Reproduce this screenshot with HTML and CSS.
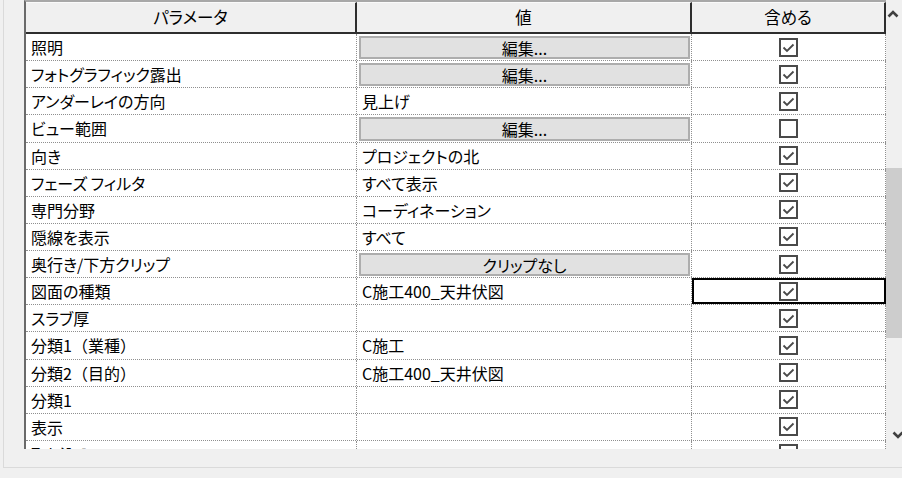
FILE: index.html
```html
<!DOCTYPE html>
<html lang="ja">
<head>
<meta charset="utf-8">
<link rel="stylesheet" href="styles.css">
</head>
<body>
<div class="panel">
  <div class="table">
    <div class="grid">
      <div class="row head">
        <div class="hcell">パラメータ</div>
        <div class="hcell">値</div>
        <div class="hcell">含める</div>
      </div>
      <div class="row"><div class="cell">照明</div><div class="cell vcell"><div class="btn">編集...</div></div><div class="cell ccell"><svg class="cb" viewBox="0 0 19 19"><rect x="1" y="1" width="17" height="17"/><path d="M4.5 9.5 L8 13 L14.5 6.5"/></svg></div></div>
      <div class="row"><div class="cell">フォトグラフィック露出</div><div class="cell vcell"><div class="btn">編集...</div></div><div class="cell ccell"><svg class="cb" viewBox="0 0 19 19"><rect x="1" y="1" width="17" height="17"/><path d="M4.5 9.5 L8 13 L14.5 6.5"/></svg></div></div>
      <div class="row"><div class="cell">アンダーレイの方向</div><div class="cell">見上げ</div><div class="cell ccell"><svg class="cb" viewBox="0 0 19 19"><rect x="1" y="1" width="17" height="17"/><path d="M4.5 9.5 L8 13 L14.5 6.5"/></svg></div></div>
      <div class="row"><div class="cell">ビュー範囲</div><div class="cell vcell"><div class="btn">編集...</div></div><div class="cell ccell"><svg class="cb" viewBox="0 0 19 19"><rect x="1" y="1" width="17" height="17"/></svg></div></div>
      <div class="row"><div class="cell">向き</div><div class="cell">プロジェクトの北</div><div class="cell ccell"><svg class="cb" viewBox="0 0 19 19"><rect x="1" y="1" width="17" height="17"/><path d="M4.5 9.5 L8 13 L14.5 6.5"/></svg></div></div>
      <div class="row"><div class="cell">フェーズ フィルタ</div><div class="cell">すべて表示</div><div class="cell ccell"><svg class="cb" viewBox="0 0 19 19"><rect x="1" y="1" width="17" height="17"/><path d="M4.5 9.5 L8 13 L14.5 6.5"/></svg></div></div>
      <div class="row"><div class="cell">専門分野</div><div class="cell">コーディネーション</div><div class="cell ccell"><svg class="cb" viewBox="0 0 19 19"><rect x="1" y="1" width="17" height="17"/><path d="M4.5 9.5 L8 13 L14.5 6.5"/></svg></div></div>
      <div class="row"><div class="cell">隠線を表示</div><div class="cell">すべて</div><div class="cell ccell"><svg class="cb" viewBox="0 0 19 19"><rect x="1" y="1" width="17" height="17"/><path d="M4.5 9.5 L8 13 L14.5 6.5"/></svg></div></div>
      <div class="row"><div class="cell">奥行き/下方クリップ</div><div class="cell vcell"><div class="btn">クリップなし</div></div><div class="cell ccell"><svg class="cb" viewBox="0 0 19 19"><rect x="1" y="1" width="17" height="17"/><path d="M4.5 9.5 L8 13 L14.5 6.5"/></svg></div></div>
      <div class="row"><div class="cell">図面の種類</div><div class="cell">C施工400_天井伏図</div><div class="cell ccell sel"><svg class="cb" viewBox="0 0 19 19"><rect x="1" y="1" width="17" height="17"/><path d="M4.5 9.5 L8 13 L14.5 6.5"/></svg></div></div>
      <div class="row"><div class="cell">スラブ厚</div><div class="cell"></div><div class="cell ccell"><svg class="cb" viewBox="0 0 19 19"><rect x="1" y="1" width="17" height="17"/><path d="M4.5 9.5 L8 13 L14.5 6.5"/></svg></div></div>
      <div class="row"><div class="cell">分類1<span class="fw">（業種）</span></div><div class="cell">C施工</div><div class="cell ccell"><svg class="cb" viewBox="0 0 19 19"><rect x="1" y="1" width="17" height="17"/><path d="M4.5 9.5 L8 13 L14.5 6.5"/></svg></div></div>
      <div class="row"><div class="cell">分類2<span class="fw">（目的）</span></div><div class="cell">C施工400_天井伏図</div><div class="cell ccell"><svg class="cb" viewBox="0 0 19 19"><rect x="1" y="1" width="17" height="17"/><path d="M4.5 9.5 L8 13 L14.5 6.5"/></svg></div></div>
      <div class="row"><div class="cell">分類1</div><div class="cell"></div><div class="cell ccell"><svg class="cb" viewBox="0 0 19 19"><rect x="1" y="1" width="17" height="17"/><path d="M4.5 9.5 L8 13 L14.5 6.5"/></svg></div></div>
      <div class="row"><div class="cell">表示</div><div class="cell"></div><div class="cell ccell"><svg class="cb" viewBox="0 0 19 19"><rect x="1" y="1" width="17" height="17"/><path d="M4.5 9.5 L8 13 L14.5 6.5"/></svg></div></div>
      <div class="row"><div class="cell">取り込み</div><div class="cell"></div><div class="cell ccell"><svg class="cb" viewBox="0 0 19 19"><rect x="1" y="1" width="17" height="17"/><path d="M4.5 9.5 L8 13 L14.5 6.5"/></svg></div></div>
    </div>
    <div class="scrollbar">
      <svg class="arrow up" width="12" height="10" viewBox="0 0 12 10"><path d="M1.5 7.5 L6 3 L10.5 7.5"/></svg>
      <div class="thumb"></div>
      <svg class="arrow down" width="12" height="10" viewBox="0 0 12 10"><path d="M1.5 2.5 L6 7 L10.5 2.5"/></svg>
    </div>
  </div>
</div>
</body>
</html>
```

FILE: styles.css
```css
html, body {
  margin: 0;
  padding: 0;
  background: #f0f0f0;
  width: 902px;
  height: 478px;
  overflow: hidden;
  font-family: "Noto Sans CJK JP", "Noto Sans", sans-serif;
  font-feature-settings: "palt";
  font-size: 16px;
  color: #000;
}

.panel {
  margin-left: 3px;
  width: 899px;
  height: 468px;
  border-left: 1px solid #dadada;
  border-bottom: 1px solid #dadada;
  padding-left: 20px;
  box-sizing: border-box;
}

.table {
  display: flex;
  height: 449px;
  overflow: hidden;
}

.grid {
  width: 862px;
  flex: none;
  border-top: 2px solid #a8a8a8;
  border-left: 2px solid #6a6a6a;
  box-sizing: border-box;
  background: #fff;
  overflow: hidden;
}

.row {
  display: grid;
  grid-template-columns: 331px 335px 194px;
  height: 27.14px;
  box-sizing: border-box;
  border-bottom: 1px dotted #8f8f8f;
}

.row.head {
  height: 32px;
  border-bottom: 2px solid #2e2e2e;
  background: #f0f0f0;
}

.hcell {
  display: flex;
  align-items: center;
  justify-content: center;
  border-right: 2px solid #2e2e2e;
  border-top: 1px solid #fafafa;
  box-sizing: border-box;
  padding-bottom: 1px;
  font-size: 16.5px;
}

.cell {
  display: flex;
  align-items: center;
  padding-left: 5px;
  box-sizing: border-box;
  border-right: 1px dotted #8f8f8f;
  white-space: nowrap;
  overflow: hidden;
}

.fw {
  font-feature-settings: normal;
}

.vcell {
  padding: 2px 1px 1px 2px;
  align-items: stretch;
}

.btn {
  flex: 1;
  display: flex;
  align-items: center;
  justify-content: center;
  background: #e1e1e1;
  border: 2px solid #adadad;
  box-sizing: border-box;
}

.ccell {
  justify-content: center;
  padding-left: 0;
  padding-right: 1px;
}

.sel {
  outline: 2px solid #000;
  outline-offset: -2px;
}

.cb {
  width: 19px;
  height: 19px;
  flex: none;
}

.cb rect {
  fill: #fff;
  stroke: #4a4a4a;
  stroke-width: 2;
}

.cb path {
  fill: none;
  stroke: #4a4a4a;
  stroke-width: 1.8;
}

.scrollbar {
  flex: 1;
  background: #f0f0f0;
  display: flex;
  flex-direction: column;
  align-items: flex-start;
}

.arrow path {
  fill: none;
  stroke: #404040;
  stroke-width: 2.6;
}

.arrow {
  display: block;
  flex: none;
}

.arrow.up {
  margin-top: 9px;
  margin-left: 1px;
}

.thumb {
  margin-top: 149px;
  width: 100%;
  height: 170px;
  background: #cdcdcd;
  flex: none;
}

.arrow.down {
  margin-top: 92px;
  margin-left: 6px;
}
```
